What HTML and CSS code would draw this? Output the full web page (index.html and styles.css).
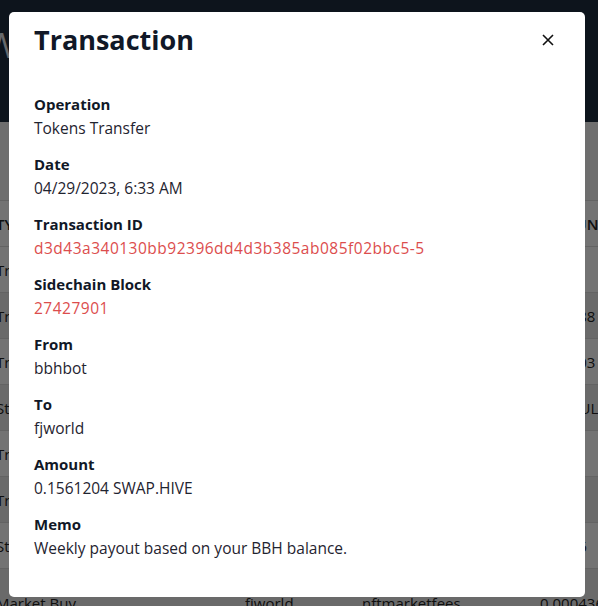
FILE: index.html
```html
<!DOCTYPE html>
<html lang="en">
<head>
<meta charset="utf-8">
<title>Transaction</title>
<link rel="stylesheet" href="styles.css">
</head>
<body>
<div class="page">
  <header class="topbar">
    <h1 class="page-title">Wallet</h1>
  </header>
  <div class="table-wrap">
    <table class="history">
      <thead>
        <tr><th class="c1">TYPE</th><th class="c2">FROM</th><th class="c3">TO</th><th class="c4">AMOUNT</th></tr>
      </thead>
      <tbody>
        <tr><td class="c1">Transfer</td><td class="c2">bbhbot</td><td class="c3">fjworld</td><td class="c4">0.0AP</td></tr>
        <tr class="alt"><td class="c1">Transfer</td><td class="c2">bbhbot</td><td class="c3">fjworld</td><td class="c4">0.01388</td></tr>
        <tr><td class="c1">Transfer</td><td class="c2">bbhbot</td><td class="c3">fjworld</td><td class="c4">0.02003</td></tr>
        <tr class="alt"><td class="c1">Stake</td><td class="c2">fjworld</td><td class="c3">fjworld</td><td class="c4">1.0VAULT</td></tr>
        <tr><td class="c1">Transfer</td><td class="c2">bbhbot</td><td class="c3">fjworld</td><td class="c4">0.0AP</td></tr>
        <tr class="alt"><td class="c1">Transfer</td><td class="c2">bbhbot</td><td class="c3">fjworld</td><td class="c4">1.00W</td></tr>
        <tr><td class="c1">Stake</td><td class="c2">fjworld</td><td class="c3">fjworld</td><td class="c4">0.0126</td></tr>
        <tr class="alt last"><td class="c1">Market Buy</td><td class="c2">fjworld</td><td class="c3">nftmarketfees</td><td class="c4">0.000436</td></tr>
      </tbody>
    </table>
  </div>
</div>

<div class="backdrop"></div>

<div class="modal" role="dialog" aria-labelledby="modal-title">
  <div class="modal-header">
    <h2 class="modal-title" id="modal-title">Transaction</h2>
    <button class="close-btn" aria-label="Close">
      <svg width="12" height="12" viewBox="0 0 12 12"><path d="M1 1 L11 11 M11 1 L1 11" stroke="#111" stroke-width="1.6" fill="none"/></svg>
    </button>
  </div>
  <div class="modal-body">
    <dl class="details">
      <div class="field"><dt>Operation</dt><dd>Tokens Transfer</dd></div>
      <div class="field"><dt>Date</dt><dd>04/29/2023, 6:33 AM</dd></div>
      <div class="field"><dt>Transaction ID</dt><dd><a class="link" href="#">d3d43a340130bb92396dd4d3b385ab085f02bbc5-5</a></dd></div>
      <div class="field"><dt>Sidechain Block</dt><dd><a class="link" href="#">27427901</a></dd></div>
      <div class="field"><dt>From</dt><dd>bbhbot</dd></div>
      <div class="field"><dt>To</dt><dd>fjworld</dd></div>
      <div class="field"><dt>Amount</dt><dd>0.1561204 SWAP.HIVE</dd></div>
      <div class="field"><dt>Memo</dt><dd>Weekly payout based on your BBH balance.</dd></div>
    </dl>
  </div>
</div>
</body>
</html>
```

FILE: styles.css
```css
* { box-sizing: border-box; }

html, body {
  margin: 0;
  padding: 0;
}

body {
  font-family: "Open Sans", "Liberation Sans", sans-serif;
  background: #f4f4f4;
  color: #212529;
  overflow: hidden;
  height: 606px;
}

.page {
  width: 598px;
  height: 606px;
  overflow: hidden;
}

.topbar {
  height: 122px;
  background: #1e2d3f;
  padding: 22px 0 0 0;
  overflow: hidden;
}

.page-title {
  margin: 0 0 0 -14px;
  font-size: 34px;
  font-weight: 400;
  color: #e4e8ee;
}

.table-wrap {
  width: 598px;
  overflow: hidden;
  padding-top: 78px;
}

.history {
  table-layout: fixed;
  width: 660px;
  margin-left: -4px;
  border-collapse: collapse;
  font-size: 15px;
  color: #222;
}

.history th,
.history td {
  height: 46px;
  padding: 0;
  border-top: 1px solid #dcdcdc;
  white-space: nowrap;
  overflow: hidden;
  text-align: left;
}

.history th {
  font-weight: 600;
}

.history tr { background: #ffffff; }
.history tr.alt { background: #ececec; }
.history tr.last td { height: 56px; padding-top: 12px; }

.c1 { width: 249px; }
.c2 { width: 117px; }
.c3 { width: 178px; }
.c4 { width: 116px; }

.backdrop {
  position: fixed;
  inset: 0;
  background: rgba(0, 0, 0, 0.55);
}

.modal {
  position: fixed;
  top: 12px;
  left: 9px;
  width: 576px;
  height: 585px;
  background: #ffffff;
  border-radius: 5px;
  color: #111827;
}

.modal-header {
  display: flex;
  justify-content: space-between;
  align-items: center;
  padding: 11px 26px 0 25px;
}

.modal-title {
  margin: 0;
  font-size: 27px;
  line-height: 34px;
  font-weight: 700;
  color: #111827;
}

.close-btn {
  background: none;
  border: 0;
  padding: 0;
  width: 20px;
  height: 20px;
  display: flex;
  align-items: center;
  justify-content: center;
  margin-right: 1px;
  cursor: pointer;
}

.modal-body {
  padding: 35px 26px 24px 25px;
}

.details {
  margin: 0;
  display: flex;
  flex-direction: column;
  gap: 12px;
}

.field dt {
  font-size: 15px;
  line-height: 24px;
  font-weight: 700;
  color: #111827;
}

.field dd {
  margin: 0;
  font-size: 15.5px;
  line-height: 24px;
  color: #1f2430;
}

.link {
  color: #dc4d4d;
  text-decoration: none;
  letter-spacing: 0.5px;
}
```
